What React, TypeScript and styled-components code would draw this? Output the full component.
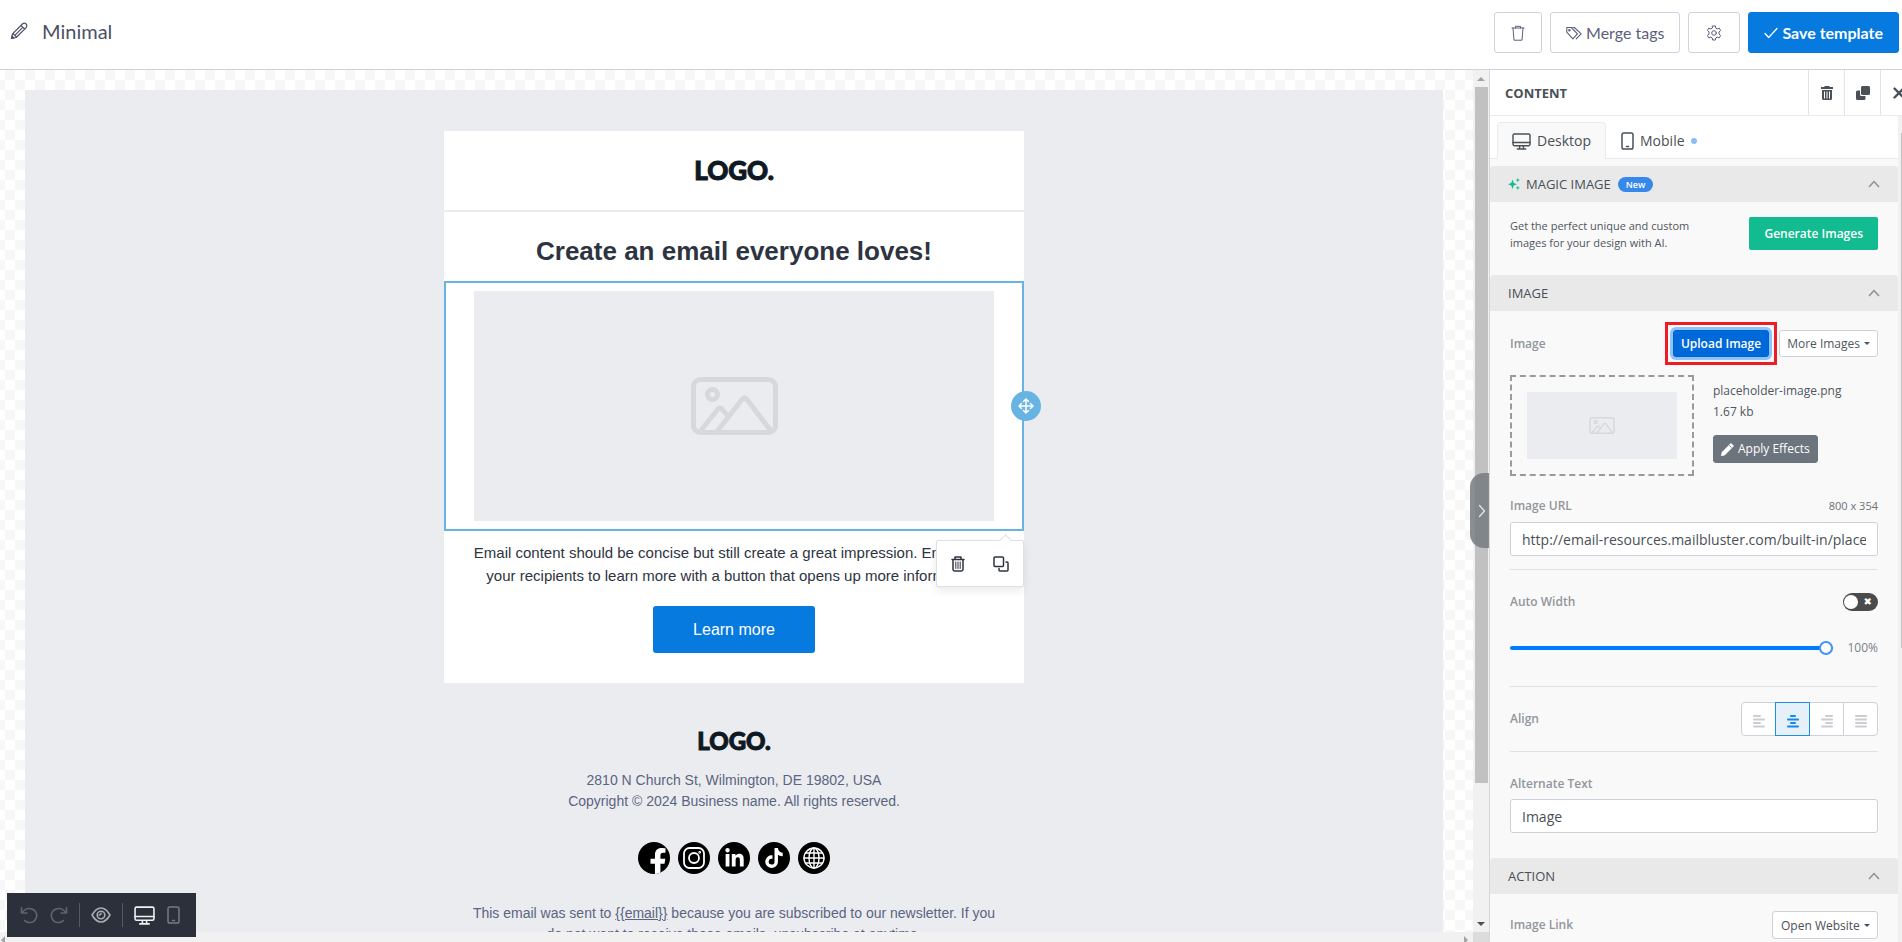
import React, { useState } from "react";
import styled, { createGlobalStyle, css } from "styled-components";
import { FaFacebookF, FaLinkedinIn, FaTiktok } from "react-icons/fa";

const GlobalStyle = createGlobalStyle`
  *, *::before, *::after { box-sizing: border-box; }
  html, body, #root { height: 100%; }
  body { margin: 0; overflow: hidden; background: #fff; font-family: "Open Sans", sans-serif; color: #50565e; }
  button, input, select { font: inherit; color: inherit; margin: 0; }
  button { cursor: pointer; }
  svg { display: block; flex: none; }
`;

const line = "#d0d2de";
const blue = "#067adf";
const select = "#67b4e3";

const Page = styled.div`
  display: flex;
  flex-direction: column;
  height: 100vh;
  overflow: hidden;
`;

/* ---------- top bar ---------- */

const TopBar = styled.header`
  display: flex;
  justify-content: space-between;
  align-items: flex-start;
  flex: none;
  height: 70px;
  padding: 12px 3px 0 10px;
  border-bottom: 1px solid ${line};
  font-family: Lato, sans-serif;
`;

const TemplateName = styled.h1`
  display: flex;
  align-items: center;
  gap: 14px;
  height: 38px;
  margin: 0;
  font-size: 20px;
  line-height: 24px;
  font-weight: 400;
  color: #4d5065;
`;

const Actions = styled.div`
  display: flex;
  gap: 8px;
`;

const TopButton = styled.button<{ $primary?: boolean; $pad: number }>`
  display: flex;
  align-items: center;
  justify-content: center;
  gap: 4px;
  height: 41px;
  padding: 0 ${(p) => p.$pad}px;
  border: 1px solid ${(p) => (p.$primary ? blue : line)};
  border-radius: 3px;
  background: ${(p) => (p.$primary ? blue : "#fff")};
  color: ${(p) => (p.$primary ? "#fff" : "#5b5f7b")};
  font-size: 16px;
  line-height: 20px;
  font-weight: ${(p) => (p.$primary ? 700 : 400)};
`;

/* ---------- workspace ---------- */

const Workspace = styled.div`
  position: relative;
  display: flex;
  flex: 1;
  min-height: 0;
  margin-right: -14px;
`;

const CanvasColumn = styled.main`
  position: relative;
  display: flex;
  flex-direction: column;
  flex: 1;
  min-width: 0;
`;

const CanvasRow = styled.div`
  display: flex;
  flex: 1;
  min-height: 0;
`;

const Checkerboard = styled.div`
  flex: 1;
  min-width: 0;
  overflow: hidden;
  padding: 20px 30px 0 25px;
  background: conic-gradient(#fff 25%, #f7f7f7 0 50%, #fff 0 75%, #f7f7f7 0) 5px 0 / 20px 20px;
`;

const Stage = styled.div`
  display: flex;
  flex-direction: column;
  align-items: center;
  min-height: 100%;
  padding-top: 41px;
  background: #ebecf0;
  font-family: "Liberation Sans", Arial, sans-serif;
  text-align: center;
`;

const Card = styled.article`
  width: 580px;
  max-width: 100%;
  background: #fff;
`;

const LogoRow = styled.div`
  display: flex;
  align-items: center;
  justify-content: center;
  height: 81px;
  padding-bottom: 2px;
  border-bottom: 2px solid #ebecf0;
`;

const Logo = styled.span<{ $small?: boolean }>`
  font-family: Lato, sans-serif;
  font-weight: 900;
  font-size: ${(p) => (p.$small ? 24 : 26)}px;
  line-height: 30px;
  color: #0f1923;
  -webkit-text-stroke: 1px #0f1923;
`;

const Heading = styled.h2`
  margin: 0;
  padding: 22px 30px 13px;
  font-size: 26px;
  line-height: 34px;
  color: #2d3440;
`;

const SelectedBlock = styled.div`
  position: relative;
  padding: 8px 28px;
  border: 2px solid ${select};
`;

const Placeholder = styled.div<{ $small?: boolean }>`
  display: flex;
  align-items: center;
  justify-content: center;
  height: ${(p) => (p.$small ? 67 : 230)}px;
  background: #ebecf0;
  color: #d7d8db;
`;

const MoveHandle = styled.button`
  position: absolute;
  top: 108px;
  right: -19px;
  display: flex;
  align-items: center;
  justify-content: center;
  width: 30px;
  height: 30px;
  padding: 0;
  border: 0;
  border-radius: 50%;
  background: ${select};
  color: #fff;
`;

const BlockTools = styled.div`
  position: absolute;
  top: 257px;
  right: -2px;
  z-index: 2;
  display: flex;
  align-items: center;
  justify-content: space-around;
  width: 88px;
  height: 47px;
  border: 1px solid #dedfe1;
  border-radius: 2px;
  background: #fff;
  box-shadow: 0 4px 8px rgba(0, 0, 0, 0.08);
  color: #2d3440;
  &::before {
    content: "";
    position: absolute;
    top: -5px;
    right: 13px;
    width: 9px;
    height: 9px;
    border: 1px solid #dedfe1;
    border-width: 1px 0 0 1px;
    background: #fff;
    transform: rotate(45deg);
  }
`;

const PlainButton = styled.button<{ $tone?: string }>`
  display: flex;
  align-items: center;
  justify-content: center;
  padding: 0;
  border: 0;
  background: none;
  color: ${(p) => p.$tone ?? "inherit"};
`;

const BodyText = styled.p`
  margin: 0;
  padding: 10px 28px;
  font-size: 15px;
  line-height: 23px;
  color: #2d3440;
`;

const CallToAction = styled.a`
  display: inline-block;
  margin: 9px 0 30px;
  padding: 12px 40px;
  border-radius: 3px;
  background: ${blue};
  color: #fff;
  font-size: 16px;
  line-height: 23px;
  text-decoration: none;
`;

const Footer = styled.footer`
  display: flex;
  flex-direction: column;
  align-items: center;
  width: 580px;
  max-width: 100%;
  padding: 43px 28px 0;
  font-size: 14px;
  line-height: 21px;
  color: #5b6480;
  p { margin: 0; }
  a { color: inherit; }
`;

const Address = styled.p`
  padding-top: 14px;
`;

const Socials = styled.div`
  display: flex;
  gap: 8px;
  padding: 30px 0 29px;
`;

const SocialLink = styled.a`
  display: flex;
  align-items: center;
  justify-content: center;
  width: 32px;
  height: 32px;
  border-radius: 50%;
  overflow: hidden;
  background: #000;
  svg { color: #fff; }
`;

/* ---------- scroll bars ---------- */

const ScrollColumn = styled.div<{ $wide?: boolean }>`
  display: flex;
  flex-direction: column;
  align-items: center;
  flex: none;
  width: ${(p) => (p.$wide ? 18 : 16)}px;
  background: #f1f1f1;
`;

const ScrollArrow = styled.span<{ $dark?: boolean; $down?: boolean }>`
  display: flex;
  align-items: center;
  justify-content: center;
  flex: none;
  width: 16px;
  height: 17px;
  &::before {
    content: "";
    border: 4px solid transparent;
    ${(p) =>
      p.$down
        ? css`border-top-color: ${p.$dark ? "#505050" : "#a3a3a3"}; border-bottom: 0;`
        : css`border-bottom-color: #a3a3a3; border-top: 0;`}
  }
`;

const ScrollTrack = styled.div`
  flex: 1;
  width: 13px;
`;

const ScrollThumb = styled.div<{ $size: number }>`
  height: ${(p) => p.$size}%;
  background: #c1c1c1;
`;

const ScrollRow = styled.div`
  display: flex;
  align-items: flex-start;
  flex: none;
  height: 10px;
  background: #f1f1f1;
`;

const SideArrow = styled.span<{ $right?: boolean }>`
  width: 0;
  height: 0;
  margin-top: 4px;
  border: 4px solid transparent;
  ${(p) =>
    p.$right
      ? css`border-left-color: #a3a3a3; border-right: 0; margin-left: auto; margin-right: 5px;`
      : css`border-right-color: #a3a3a3; border-left: 0; margin-left: 1px;`}
`;

const ScrollCorner = styled.span`
  width: 16px;
  height: 10px;
  background: #dcdcdc;
`;

/* ---------- floating tool bar and panel toggle ---------- */

const FloatingBar = styled.div`
  position: absolute;
  left: 7px;
  bottom: 5px;
  display: flex;
  align-items: center;
  height: 44px;
  padding: 0 16px 0 13px;
  background: #2b303a;
  color: #5f646c;
`;

const BarGroup = styled.div<{ $divided?: boolean }>`
  display: flex;
  align-items: center;
  gap: 12px;
  height: 24px;
  ${(p) =>
    p.$divided &&
    css`
      margin-left: 11px;
      padding-left: 11px;
      border-left: 1px solid #555a62;
    `}
`;

const PanelToggle = styled.button`
  position: absolute;
  right: 0;
  top: 403px;
  z-index: 3;
  display: flex;
  align-items: center;
  justify-content: center;
  width: 19px;
  height: 75px;
  padding: 0 0 0 4px;
  border: 0;
  border-radius: 14px 0 0 14px;
  background: rgba(118, 123, 129, 0.85);
  color: #e4e5e7;
`;

/* ---------- side panel ---------- */

const Panel = styled.aside`
  display: flex;
  flex-direction: column;
  flex: none;
  width: 427px;
  border-left: 1px solid #d6d7da;
  background: #f9f9f9;
`;

const PanelHeader = styled.div`
  display: flex;
  align-items: center;
  flex: none;
  height: 46px;
  padding-left: 15px;
  border-bottom: 1px solid #ebebeb;
  background: #fff;
`;

const PanelTitle = styled.h2`
  flex: 1;
  margin: 0;
  font-size: 13px;
  line-height: 18px;
  font-weight: 700;
  color: #495057;
`;

const HeaderButton = styled(PlainButton)`
  width: 36px;
  height: 45px;
  border-left: 1px solid #e2e3e5;
  color: #495057;
`;

const PanelScroll = styled.div`
  display: flex;
  flex: 1;
  min-height: 0;
  overflow: hidden;
`;

const PanelContent = styled.div`
  flex: 1;
  min-width: 0;
`;

const Tabs = styled.div`
  display: flex;
  height: 43px;
  padding: 6px 7px 0;
  border-bottom: 1px solid #ebebeb;
  background: #fff;
`;

const Tab = styled.button<{ $active?: boolean }>`
  display: flex;
  align-items: center;
  gap: 6px;
  height: 37px;
  padding: 0 14px;
  border: 1px solid ${(p) => (p.$active ? "#ebebeb" : "transparent")};
  border-bottom: 0;
  border-radius: 4px 4px 0 0;
  background: ${(p) => (p.$active ? "#f9f9f9" : "transparent")};
  font-size: 14px;
  line-height: 20px;
  color: #495057;
`;

const Dot = styled.i`
  width: 6px;
  height: 6px;
  border-radius: 50%;
  background: #8bbcf7;
`;

const SectionHeader = styled.button<{ $first?: boolean }>`
  display: flex;
  align-items: center;
  width: 100%;
  height: 36px;
  margin-top: ${(p) => (p.$first ? 7 : 0)}px;
  padding: 0 18px;
  border: 0;
  border-radius: 4px 4px 0 0;
  background: #e9e9e9;
  font-size: 13px;
  line-height: 18px;
  color: #495057;
  text-align: left;
`;

const SectionTitle = styled.span`
  display: flex;
  align-items: center;
  flex: 1;
  gap: 6px;
`;

const Badge = styled.span`
  margin-left: 1px;
  padding: 0 8px;
  border-radius: 8px;
  background: #3688ea;
  color: #fff;
  font-size: 9px;
  line-height: 15px;
  font-weight: 600;
`;

const Section = styled.div`
  padding: 0 20px;
`;

const MagicRow = styled.div`
  display: flex;
  justify-content: space-between;
  align-items: flex-start;
  padding: 15px 0 24px;
`;

const Hint = styled.p`
  width: 200px;
  margin: 0;
  font-size: 11px;
  line-height: 17px;
`;

const GenerateButton = styled.button`
  height: 33px;
  padding: 0 15px;
  border: 0;
  border-radius: 2px;
  background: #12bb90;
  color: #fff;
  font-size: 12px;
  line-height: 18px;
  font-weight: 600;
`;

const Row = styled.div<{ $top?: number; $bottom?: number }>`
  display: flex;
  justify-content: space-between;
  align-items: center;
  padding: ${(p) => p.$top ?? 0}px 0 ${(p) => p.$bottom ?? 0}px;
`;

const Label = styled.label`
  font-size: 12px;
  line-height: 18px;
  font-weight: 600;
  color: #92969b;
`;

const Note = styled.span`
  font-size: 11px;
  line-height: 18px;
  color: #6c7177;
`;

const Percent = styled.output`
  font-size: 12px;
  line-height: 20px;
  color: #7b8086;
`;

const Rule = styled.hr`
  margin: 0;
  border: 0;
  border-top: 1px solid #e0e1e3;
`;

const ButtonPair = styled.div`
  display: flex;
  gap: 10px;
`;

const SmallButton = styled.button<{ $kind: "primary" | "plain" | "dark" }>`
  display: flex;
  align-items: center;
  gap: 4px;
  height: ${(p) => (p.$kind === "dark" ? 28 : 27)}px;
  padding: 0 7px;
  border: 1px solid #ced1da;
  border-radius: 3px;
  font-size: 12px;
  line-height: 18px;
  white-space: nowrap;
  background: #fff;
  ${(p) =>
    p.$kind === "primary" &&
    css`
      border-color: #0062cc;
      background: #0069d9;
      color: #fff;
      font-weight: 600;
      box-shadow: 0 0 0 3px #8fc3fb;
    `}
  ${(p) =>
    p.$kind === "dark" &&
    css`
      border-color: #6c757d;
      background: #6c757d;
      color: #fff;
      font-weight: 500;
    `}
`;

const Highlight = styled.div`
  position: relative;
  &::after {
    content: "";
    position: absolute;
    inset: -8px;
    border: 3px solid #ee1c25;
    pointer-events: none;
  }
`;

const Caret = styled.i`
  border: 3px solid transparent;
  border-top-color: currentColor;
  border-bottom: 0;
`;

const FileRow = styled.div`
  display: flex;
  gap: 19px;
  padding: 18px 0 21px;
`;

const DropZone = styled.div`
  flex: none;
  width: 184px;
  height: 101px;
  padding: 15px;
  border: 2px dashed #9a9a9a;
`;

const FileInfo = styled.div`
  display: flex;
  flex-direction: column;
  align-items: flex-start;
  font-size: 12px;
  line-height: 21px;
  padding-top: 5px;
`;

const EffectsSlot = styled.div`
  padding-top: 13px;
`;

const TextInput = styled.input`
  display: block;
  width: 100%;
  height: 34px;
  padding: 0 11px;
  border: 1px solid #ced1da;
  border-radius: 3px;
  background: #fff;
  font-size: 14px;
  line-height: 20px;
  color: #495057;
`;

const Field = styled.div`
  padding-bottom: 13px;
`;

const Switch = styled.input`
  appearance: none;
  position: relative;
  width: 35px;
  height: 18px;
  border-radius: 9px;
  background: #4b4b4b;
  &::before {
    content: "";
    position: absolute;
    top: 2px;
    left: 1px;
    width: 14px;
    height: 14px;
    border-radius: 50%;
    background: #fff;
  }
  &::after {
    content: "✖";
    position: absolute;
    top: 0;
    right: 6px;
    font: 10px/18px "DejaVu Sans", sans-serif;
    color: #fff;
  }
`;

const Slider = styled.input`
  appearance: none;
  flex: 1;
  height: 20px;
  margin-right: 14px;
  background: transparent;
  &::-webkit-slider-runnable-track {
    height: 4px;
    border-radius: 2px;
    background: #007bff;
  }
  &::-webkit-slider-thumb {
    appearance: none;
    width: 14px;
    height: 14px;
    margin-top: -5px;
    border: 2px solid #3f96f5;
    border-radius: 50%;
    background: #fff;
  }
`;

const AlignGroup = styled.div`
  display: flex;
`;

const AlignButton = styled.button<{ $active?: boolean }>`
  position: relative;
  z-index: ${(p) => (p.$active ? 1 : 0)};
  display: flex;
  align-items: center;
  justify-content: center;
  width: 35px;
  height: 34px;
  padding: 4px 0 0;
  border: 1px solid ${(p) => (p.$active ? "#1f8ee8" : "#ced1da")};
  background: ${(p) => (p.$active ? "#e6f0f9" : "#fff")};
  color: ${(p) => (p.$active ? "#1287ee" : "#cbcdd1")};
  & + & { margin-left: -1px; }
  &:first-child { border-radius: 4px 0 0 4px; }
  &:last-child { border-radius: 0 4px 4px 0; }
`;

const SelectWrap = styled.span`
  position: relative;
  &::after {
    content: "";
    position: absolute;
    top: 13px;
    right: 8px;
    border: 3px solid transparent;
    border-top-color: #495057;
    border-bottom: 0;
    pointer-events: none;
  }
`;

const Select = styled.select`
  appearance: none;
  height: 28px;
  padding: 0 17px 0 8px;
  border: 1px solid #ced1da;
  border-radius: 3px;
  background: #fff;
  font-size: 12px;
  color: #495057;
`;

/* ---------- icons ---------- */

type IconProps = { w: number; h?: number; box: string; sw?: number; children: React.ReactNode };
const Icon = ({ w, h = w, box, sw = 1, children }: IconProps) => (
  <svg width={w} height={h} viewBox={box} fill="none" stroke="currentColor" strokeWidth={sw} strokeLinecap="round" strokeLinejoin="round" aria-hidden="true">
    {children}
  </svg>
);

const PencilIcon = () => (
  <Icon w={18} box="0 0 18 18" sw={1.2}>
    <path d="M1.500 16.500l1-4.600L12.400 2a2.600 2.600 0 0 1 3.700 3.700L6.200 15.500z M11 3.400l3.700 3.700 M3 11.500l3.500 3.700 M5.600 12.600L12.500 5.600" />
    <path fill="currentColor" d="M1.500 16.500l.5-2.300 1.800 1.800z" />
  </Icon>
);
const TrashThinIcon = () => (
  <Icon w={14} h={16} box="0 0 14 16">
    <path d="M1 3h12 M4.500 3V1.300h5V3 M2 3l1 12.200h8L12 3" />
  </Icon>
);
const TagsIcon = () => (
  <Icon w={16} h={14} box="0 0 16 14" sw={1.1}>
    <path d="M.8 2.400v3.800l6 6.600 4.600-5L5.300 1.500H.8z M7.500 1.500h.8l6.900 6.300-5 5 M5.300 1.500l1 .1" />
    <circle cx="3.400" cy="4.300" r=".7" />
  </Icon>
);
const GearIcon = () => (
  <Icon w={16} box="0 0 16 16">
    <circle cx="8" cy="8" r="2.300" />
    <path d="M6.600 1h2.800l.4 2.100 1.400.8 2-.8 1.400 2.400L13 7v2l1.600 1.500-1.400 2.400-2-.8-1.400.8-.4 2.100H6.600l-.4-2.100-1.400-.8-2 .8-1.400-2.400L3 9V7L1.400 5.500l1.400-2.400 2 .8 1.400-.8z" />
  </Icon>
);
const CheckIcon = () => (
  <Icon w={14} h={12} box="0 0 14 12" sw={1.3}>
    <path d="M1 6.500l3.700 4L13 1.500" />
  </Icon>
);
const TrashSolidIcon = () => (
  <svg width="12" height="14" viewBox="0 0 12 14" aria-hidden="true">
    <path fill="currentColor" fillRule="evenodd" d="M4 0h4l1 1h3v2H0V1h3zM1 4h10v8.500A1.500 1.500 0 0 1 9.500 14h-7A1.500 1.500 0 0 1 1 12.500zM3 5.500v7h1v-7zm2.500 0v7h1v-7zm2.500 0v7h1v-7z" />
  </svg>
);
const CloneSolidIcon = () => (
  <svg width="14" height="14" viewBox="0 0 14 14" aria-hidden="true">
    <path fill="currentColor" d="M6.500 0h6A1.500 1.500 0 0 1 14 1.500v6A1.500 1.500 0 0 1 12.500 9h-6A1.500 1.500 0 0 1 5 7.500v-6A1.500 1.500 0 0 1 6.500 0zM4 4.500v4A1.500 1.500 0 0 0 5.500 10h4v2.500A1.500 1.500 0 0 1 8 14H1.500A1.500 1.500 0 0 1 0 12.500V6a1.500 1.500 0 0 1 1.500-1.500z" />
  </svg>
);
const CloseIcon = () => (
  <Icon w={12} box="0 0 12 12" sw={2.4}><path d="M1.500 1.500l9 9 M10.500 1.500l-9 9" /></Icon>
);
const TrashLineIcon = () => (
  <Icon w={14} h={16} box="0 0 14 16" sw={1.5}>
    <path d="M1 3.500h12 M4 3V1h6v2 M2 3.500v9.800a1.700 1.700 0 0 0 1.700 1.700h6.600a1.700 1.700 0 0 0 1.700-1.700V3.500" />
    <path strokeWidth="1" d="M4.800 6v6.500 M7 6v6.500 M9.200 6v6.500" />
  </Icon>
);
const CloneLineIcon = () => (
  <Icon w={16} box="0 0 16 16" sw={1.5}>
    <rect x="1" y="1" width="9.500" height="9.500" rx="1" />
    <path d="M6 12.500V14a1 1 0 0 0 1 1h7a1 1 0 0 0 1-1V7a1 1 0 0 0-1-1h-1" />
  </Icon>
);
const MoveIcon = () => (
  <Icon w={16} box="0 0 16 16" sw={1.5}>
    <path d="M8 1v14 M1 8h14 M5.500 3.500L8 1l2.500 2.500 M5.500 12.500L8 15l2.500-2.500 M3.500 5.500L1 8l2.500 2.500 M12.500 5.500L15 8l-2.500 2.500" />
  </Icon>
);
const DesktopIcon = ({ w = 20 }: { w?: number }) => (
  <Icon w={w} h={w - 2} box="0 0 20 18" sw={1.5}>
    <rect x="1" y="1" width="18" height="12.500" rx="1.500" />
    <path d="M1 10h18 M8 14v2.500 M12 14v2.500 M5.500 17h9" />
  </Icon>
);
const PhoneIcon = () => (
  <Icon w={13} h={18} box="0 0 13 18" sw={1.5}>
    <rect x="1" y="1" width="11" height="16" rx="1.800" />
    <path d="M5.500 14.500h2" />
  </Icon>
);
const SparkIcon = () => (
  <svg width="12" height="12" viewBox="0 0 12 12" fill="#12bb90" aria-hidden="true">
    <path d="M4.500 1.500L5.800 5 9 6.300 5.800 7.500 4.500 11 3.200 7.500 0 6.300 3.200 5zM9.800 0l.6 1.500 1.500.6-1.500.6-.6 1.500-.6-1.500L7.700 2.100l1.500-.6zM9.800 7.700l.6 1.500 1.500.6-1.500.6-.6 1.500-.6-1.500-1.500-.6 1.500-.6z" />
  </svg>
);
const ChevronUp = () => (
  <svg width="12" height="8" viewBox="0 0 12 8" fill="none" stroke="#8e9093" strokeWidth="1.500" aria-hidden="true"><path d="M1 7l5-5.500L11 7" /></svg>
);
const ChevronRight = () => (
  <Icon w={8} h={14} box="0 0 8 14" sw={1.3}><path d="M1.500 1.500L6.500 7l-5 5.500" /></Icon>
);
const PictureIcon = ({ w }: { w: number }) => (
  <Icon w={w} h={Math.round((w * 58) / 87)} box="0 0 87 58" sw={5}>
    <rect x="2.500" y="2.500" width="82" height="53" rx="7" />
    <circle cx="21.500" cy="17.500" r="5" />
    <path d="M9 54.500L27 32q2-2 4 0l5.500 6.500 M26 54.500L51 22.500q2.500-2.500 5 0L80 54" />
  </Icon>
);
const WandIcon = () => (
  <svg width="13" height="13" viewBox="0 0 13 13" aria-hidden="true">
    <path fill="currentColor" d="M10.500.4L12.500 2.400q.5.600 0 1.200L4 12q-.4.300-.8.400L.6 13 0 12.400l.6-2.600q.1-.4.400-.8L9.300.4q.6-.5 1.200 0z" />
    <path stroke="#6c757d" strokeWidth=".8" d="M8.300 2.300l2.300 2.300" />
  </svg>
);
const UndoIcon = () => (
  <Icon w={18} box="0 0 18 18" sw={1.6}><path d="M1.500 1.500v5.500h5.500 M1.800 7C4 3.800 7 2 10.500 2.600a7 7 0 1 1-5.700 12" /></Icon>
);
const RedoIcon = () => (
  <Icon w={18} box="0 0 18 18" sw={1.6}><path d="M16.500 1.500v5.500H11 M16.200 7C14 3.800 11 2 7.500 2.600a7 7 0 1 0 5.700 12" /></Icon>
);
const EyeIcon = () => (
  <Icon w={20} h={16} box="0 0 20 16" sw={1.6}>
    <path d="M1 8q4-7 9-7t9 7q-4 7-9 7T1 8z" />
    <circle cx="10" cy="8" r="3.800" />
    <path d="M10 6.200A1.800 1.800 0 0 1 8.200 8" />
  </Icon>
);
const InstagramIcon = () => (
  <Icon w={22} box="0 0 22 22" sw={1.8}>
    <rect x="1" y="1" width="20" height="20" rx="5.500" />
    <circle cx="11" cy="11" r="5" />
    <circle cx="16.700" cy="5.300" r=".5" />
  </Icon>
);
const GlobeIcon = () => (
  <Icon w={22} box="0 0 22 22" sw={1.4}>
    <circle cx="11" cy="11" r="10" />
    <ellipse cx="11" cy="11" rx="5" ry="10" />
    <path d="M11 1v20 M1 11h20 M2.500 6h17 M2.500 16h17" />
  </Icon>
);
const FacebookIcon = styled(FaFacebookF)`
  align-self: flex-end;
  margin: 0 0 -2px 8px;
`;
const alignLines = {
  left: [[0, 8], [0, 12], [0, 8], [0, 12]],
  center: [[3, 6], [0, 12], [3, 6], [0, 12]],
  right: [[4, 8], [0, 12], [4, 8], [0, 12]],
  justify: [[0, 12], [0, 12], [0, 12], [0, 12]],
} as const;
type Alignment = keyof typeof alignLines;
const AlignIcon = ({ kind }: { kind: Alignment }) => (
  <svg width="12" height="13" viewBox="0 0 12 13" fill="currentColor" aria-hidden="true">
    {alignLines[kind].map(([x, w], i) => (
      <rect key={i} x={x} y={i * 3.5} width={w} height="2" rx="1" />
    ))}
  </svg>
);

/* ---------- page ---------- */

export default function App() {
  const [align, setAlign] = useState<Alignment>("center");
  const [width, setWidth] = useState(100);

  return (
    <Page>
      <GlobalStyle />
      <TopBar>
        <TemplateName><PencilIcon />Minimal</TemplateName>
        <Actions>
          <TopButton $pad={16} aria-label="Delete template"><TrashThinIcon /></TopButton>
          <TopButton $pad={15}><TagsIcon />Merge tags</TopButton>
          <TopButton $pad={17} aria-label="Settings"><GearIcon /></TopButton>
          <TopButton $pad={15} $primary><CheckIcon />Save template</TopButton>
        </Actions>
      </TopBar>

      <Workspace>
        <CanvasColumn>
          <CanvasRow>
            <Checkerboard>
              <Stage>
                <Card>
                  <LogoRow><Logo>LOGO.</Logo></LogoRow>
                  <Heading>Create an email everyone loves!</Heading>
                  <SelectedBlock>
                    <Placeholder><PictureIcon w={87} /></Placeholder>
                    <MoveHandle aria-label="Move block"><MoveIcon /></MoveHandle>
                    <BlockTools>
                      <PlainButton aria-label="Delete block"><TrashLineIcon /></PlainButton>
                      <PlainButton aria-label="Duplicate block"><CloneLineIcon /></PlainButton>
                    </BlockTools>
                  </SelectedBlock>
                  <BodyText>
                    Email content should be concise but still create a great impression. Encourage
                    your recipients to learn more with a button that opens up more information.
                  </BodyText>
                  <CallToAction href="#learn">Learn more</CallToAction>
                </Card>
                <Footer>
                  <Logo $small>LOGO.</Logo>
                  <Address>2810 N Church St, Wilmington, DE 19802, USA</Address>
                  <p>Copyright © 2024 Business name. All rights reserved.</p>
                  <Socials>
                    <SocialLink href="#facebook" aria-label="Facebook"><FacebookIcon size={28} /></SocialLink>
                    <SocialLink href="#instagram" aria-label="Instagram"><InstagramIcon /></SocialLink>
                    <SocialLink href="#linkedin" aria-label="LinkedIn"><FaLinkedinIn size={21} /></SocialLink>
                    <SocialLink href="#tiktok" aria-label="TikTok"><FaTiktok size={20} /></SocialLink>
                    <SocialLink href="#website" aria-label="Website"><GlobeIcon /></SocialLink>
                  </Socials>
                  <p>
                    This email was sent to <a href="#email">{"{{email}}"}</a> because you are subscribed to our newsletter. If you
                    do not want to receive these emails, unsubscribe at anytime.
                  </p>
                </Footer>
              </Stage>
            </Checkerboard>
            <ScrollColumn>
              <ScrollArrow />
              <ScrollTrack><ScrollThumb $size={84} /></ScrollTrack>
              <ScrollArrow $down $dark />
            </ScrollColumn>
          </CanvasRow>
          <ScrollRow>
            <SideArrow />
            <SideArrow $right />
            <ScrollCorner />
          </ScrollRow>

          <FloatingBar>
            <BarGroup>
              <PlainButton aria-label="Undo"><UndoIcon /></PlainButton>
              <PlainButton aria-label="Redo"><RedoIcon /></PlainButton>
            </BarGroup>
            <BarGroup $divided>
              <PlainButton aria-label="Preview" $tone="#a9acb2"><EyeIcon /></PlainButton>
            </BarGroup>
            <BarGroup $divided>
              <PlainButton aria-label="Desktop view" $tone="#f1f3f3"><DesktopIcon w={21} /></PlainButton>
              <PlainButton aria-label="Mobile view" $tone="#757a82"><PhoneIcon /></PlainButton>
            </BarGroup>
          </FloatingBar>
          <PanelToggle aria-label="Hide panel"><ChevronRight /></PanelToggle>
        </CanvasColumn>

        <Panel>
          <PanelHeader>
            <PanelTitle>CONTENT</PanelTitle>
            <HeaderButton aria-label="Delete"><TrashSolidIcon /></HeaderButton>
            <HeaderButton aria-label="Duplicate"><CloneSolidIcon /></HeaderButton>
            <HeaderButton aria-label="Close"><CloseIcon /></HeaderButton>
          </PanelHeader>
          <PanelScroll>
            <PanelContent>
              <Tabs role="tablist">
                <Tab role="tab" aria-selected="true" $active><DesktopIcon w={19} />Desktop</Tab>
                <Tab role="tab" aria-selected="false"><PhoneIcon />Mobile<Dot /></Tab>
              </Tabs>

              <SectionHeader $first>
                <SectionTitle><SparkIcon />MAGIC IMAGE<Badge>New</Badge></SectionTitle>
                <ChevronUp />
              </SectionHeader>
              <Section>
                <MagicRow>
                  <Hint>Get the perfect unique and custom images for your design with AI.</Hint>
                  <GenerateButton>Generate Images</GenerateButton>
                </MagicRow>
              </Section>

              <SectionHeader>
                <SectionTitle>IMAGE</SectionTitle>
                <ChevronUp />
              </SectionHeader>
              <Section>
                <Row $top={19}>
                  <Label as="span">Image</Label>
                  <ButtonPair>
                    <Highlight><SmallButton $kind="primary">Upload Image</SmallButton></Highlight>
                    <SmallButton $kind="plain" aria-haspopup="menu">More Images<Caret /></SmallButton>
                  </ButtonPair>
                </Row>
                <FileRow>
                  <DropZone><Placeholder $small><PictureIcon w={26} /></Placeholder></DropZone>
                  <FileInfo>
                    <span>placeholder-image.png</span>
                    <span>1.67 kb</span>
                    <EffectsSlot>
                      <SmallButton $kind="dark"><WandIcon />Apply Effects</SmallButton>
                    </EffectsSlot>
                  </FileInfo>
                </FileRow>
                <Field>
                  <Row $bottom={7}>
                    <Label htmlFor="image-url">Image URL</Label>
                    <Note>800 x 354</Note>
                  </Row>
                  <TextInput id="image-url" defaultValue="http://email-resources.mailbluster.com/built-in/placeholder-image.png" />
                </Field>
                <Rule />
                <Row $top={23} $bottom={27}>
                  <Label htmlFor="auto-width">Auto Width</Label>
                  <Switch id="auto-width" type="checkbox" role="switch" />
                </Row>
                <Row $bottom={28}>
                  <Slider
                    type="range"
                    min={0}
                    max={100}
                    value={width}
                    onChange={(e) => setWidth(Number(e.target.value))}
                    aria-label="Image width"
                  />
                  <Percent>{width}%</Percent>
                </Row>
                <Rule />
                <Row $top={15} $bottom={15}>
                  <Label as="span" id="align-label">Align</Label>
                  <AlignGroup role="group" aria-labelledby="align-label">
                    {(Object.keys(alignLines) as Alignment[]).map((kind) => (
                      <AlignButton
                        key={kind}
                        $active={align === kind}
                        aria-pressed={align === kind}
                        aria-label={`Align ${kind}`}
                        onClick={() => setAlign(kind)}
                      >
                        <AlignIcon kind={kind} />
                      </AlignButton>
                    ))}
                  </AlignGroup>
                </Row>
                <Rule />
                <Row $top={23} $bottom={6}>
                  <Label htmlFor="alt-text">Alternate Text</Label>
                </Row>
                <Row $bottom={25}>
                  <TextInput id="alt-text" defaultValue="Image" />
                </Row>
              </Section>

              <SectionHeader>
                <SectionTitle>ACTION</SectionTitle>
                <ChevronUp />
              </SectionHeader>
              <Section>
                <Row $top={17}>
                  <Label htmlFor="image-link">Image Link</Label>
                  <SelectWrap>
                    <Select id="image-link" defaultValue="web">
                      <option value="web">Open Website</option>
                    </Select>
                  </SelectWrap>
                </Row>
              </Section>
            </PanelContent>
            <ScrollColumn $wide>
              <ScrollArrow />
              <ScrollTrack><ScrollThumb $size={65} /></ScrollTrack>
              <ScrollArrow $down $dark />
            </ScrollColumn>
          </PanelScroll>
        </Panel>
      </Workspace>
    </Page>
  );
}
